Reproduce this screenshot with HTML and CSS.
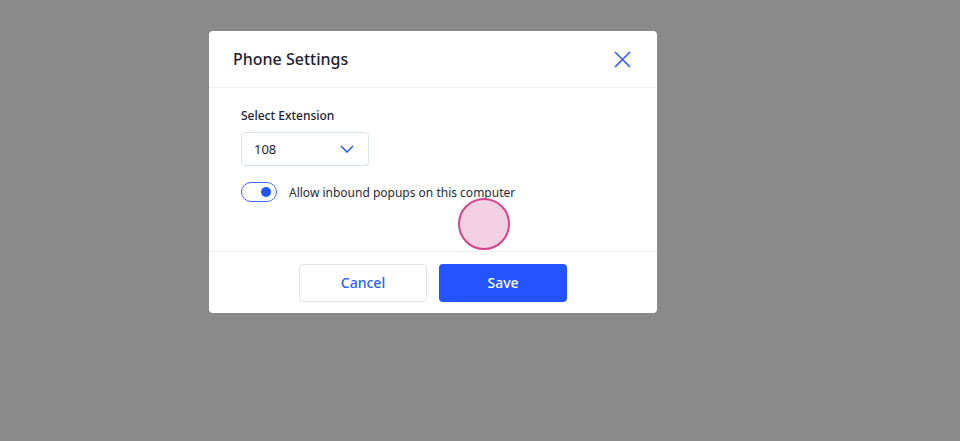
FILE: index.html
```html
<!DOCTYPE html>
<html lang="en">
<head>
    <meta charset="UTF-8">
    <meta name="viewport" content="width=device-width, initial-scale=1.0">
    <title>Phone Settings</title>
    <link rel="stylesheet" href="styles.css">
</head>
<body>
    <div class="overlay">
        <div class="modal">
            <div class="modal-header">
                <h2>Phone Settings</h2>
                <button class="close-btn" aria-label="Close">
                    <svg width="17" height="17" viewBox="0 0 17 17"><path d="M1 1 L16 16 M16 1 L1 16" stroke="#2b5cff" stroke-width="1.6" fill="none"/></svg>
                </button>
            </div>
            <div class="modal-body">
                <label class="field-label">Select Extension</label>
                <div class="select">
                    <span>108</span>
                    <svg width="14" height="8" viewBox="0 0 14 8"><path d="M1 1 L7 7 L13 1" stroke="#2b5cff" stroke-width="1.6" fill="none"/></svg>
                </div>
                <div class="toggle-row">
                    <span class="toggle"><span class="knob"></span></span>
                    <span class="toggle-label">Allow inbound popups on this computer</span>
                </div>
            </div>
            <div class="modal-footer">
                <button class="btn btn-outline">Cancel</button>
                <button class="btn btn-primary">Save</button>
            </div>
            <!-- click ripple marker -->
            <span class="tap"></span>
        </div>
    </div>
</body>
</html>
```

FILE: styles.css
```css
body {
    margin: 0;
    font-family: 'Noto Sans', 'Open Sans', sans-serif;
    background-color: #8a8a8a;
    color: #1f2533;
}
.overlay {
    height: 441px;
    padding-top: 31px;
    padding-left: 209px;
    box-sizing: border-box;
}
.modal {
    position: relative;
    width: 448px;
    height: 282px;
    background: white;
    border-radius: 4px;
    display: flex;
    flex-direction: column;
}
.modal-header {
    height: 57px;
    box-sizing: border-box;
    border-bottom: 1px solid #eef0f5;
    display: flex;
    align-items: center;
    justify-content: space-between;
    padding: 0 26px 0 24px;
}
.modal-header h2 {
    margin: 0;
    font-size: 16px;
    font-weight: 500;
    color: #1c2233;
}
.close-btn {
    background: none;
    border: none;
    padding: 0;
    display: flex;
    cursor: pointer;
}
.modal-body {
    flex: 1;
    padding: 19px 32px 0;
}
.field-label {
    display: block;
    font-size: 12px;
    font-weight: 500;
    color: #1c2233;
    line-height: 17px;
}
.select {
    margin-top: 8px;
    width: 128px;
    height: 34px;
    box-sizing: border-box;
    border: 1px solid #dde3ee;
    border-radius: 4px;
    display: flex;
    align-items: center;
    justify-content: space-between;
    padding: 0 14px 0 12px;
    font-size: 13px;
}
.toggle-row {
    margin-top: 16px;
    display: flex;
    align-items: center;
}
.toggle {
    width: 36px;
    height: 20px;
    box-sizing: border-box;
    border: 1.5px solid #3d6bff;
    border-radius: 10px;
    display: flex;
    align-items: center;
    justify-content: flex-end;
    padding-right: 5px;
}
.knob {
    width: 10px;
    height: 10px;
    border-radius: 50%;
    background: #2354ff;
}
.toggle-label {
    margin-left: 12px;
    font-size: 12px;
    color: #262c3a;
}
.modal-footer {
    height: 62px;
    box-sizing: border-box;
    border-top: 1px solid #eef0f5;
    display: flex;
    justify-content: center;
    align-items: center;
    gap: 12px;
}
.btn {
    width: 128px;
    height: 38px;
    border-radius: 4px;
    font-family: inherit;
    font-size: 14px;
    font-weight: 500;
    cursor: pointer;
}
.btn-outline {
    background: white;
    border: 1px solid #dfe4ee;
    color: #2b5cff;
}
.btn-primary {
    background: #2354ff;
    border: none;
    color: white;
}
.tap {
    position: absolute;
    left: 249px;
    top: 167px;
    width: 48px;
    height: 48px;
    border-radius: 50%;
    background: #f3d0e3;
    border: 2px solid #d6458c;
}
```
